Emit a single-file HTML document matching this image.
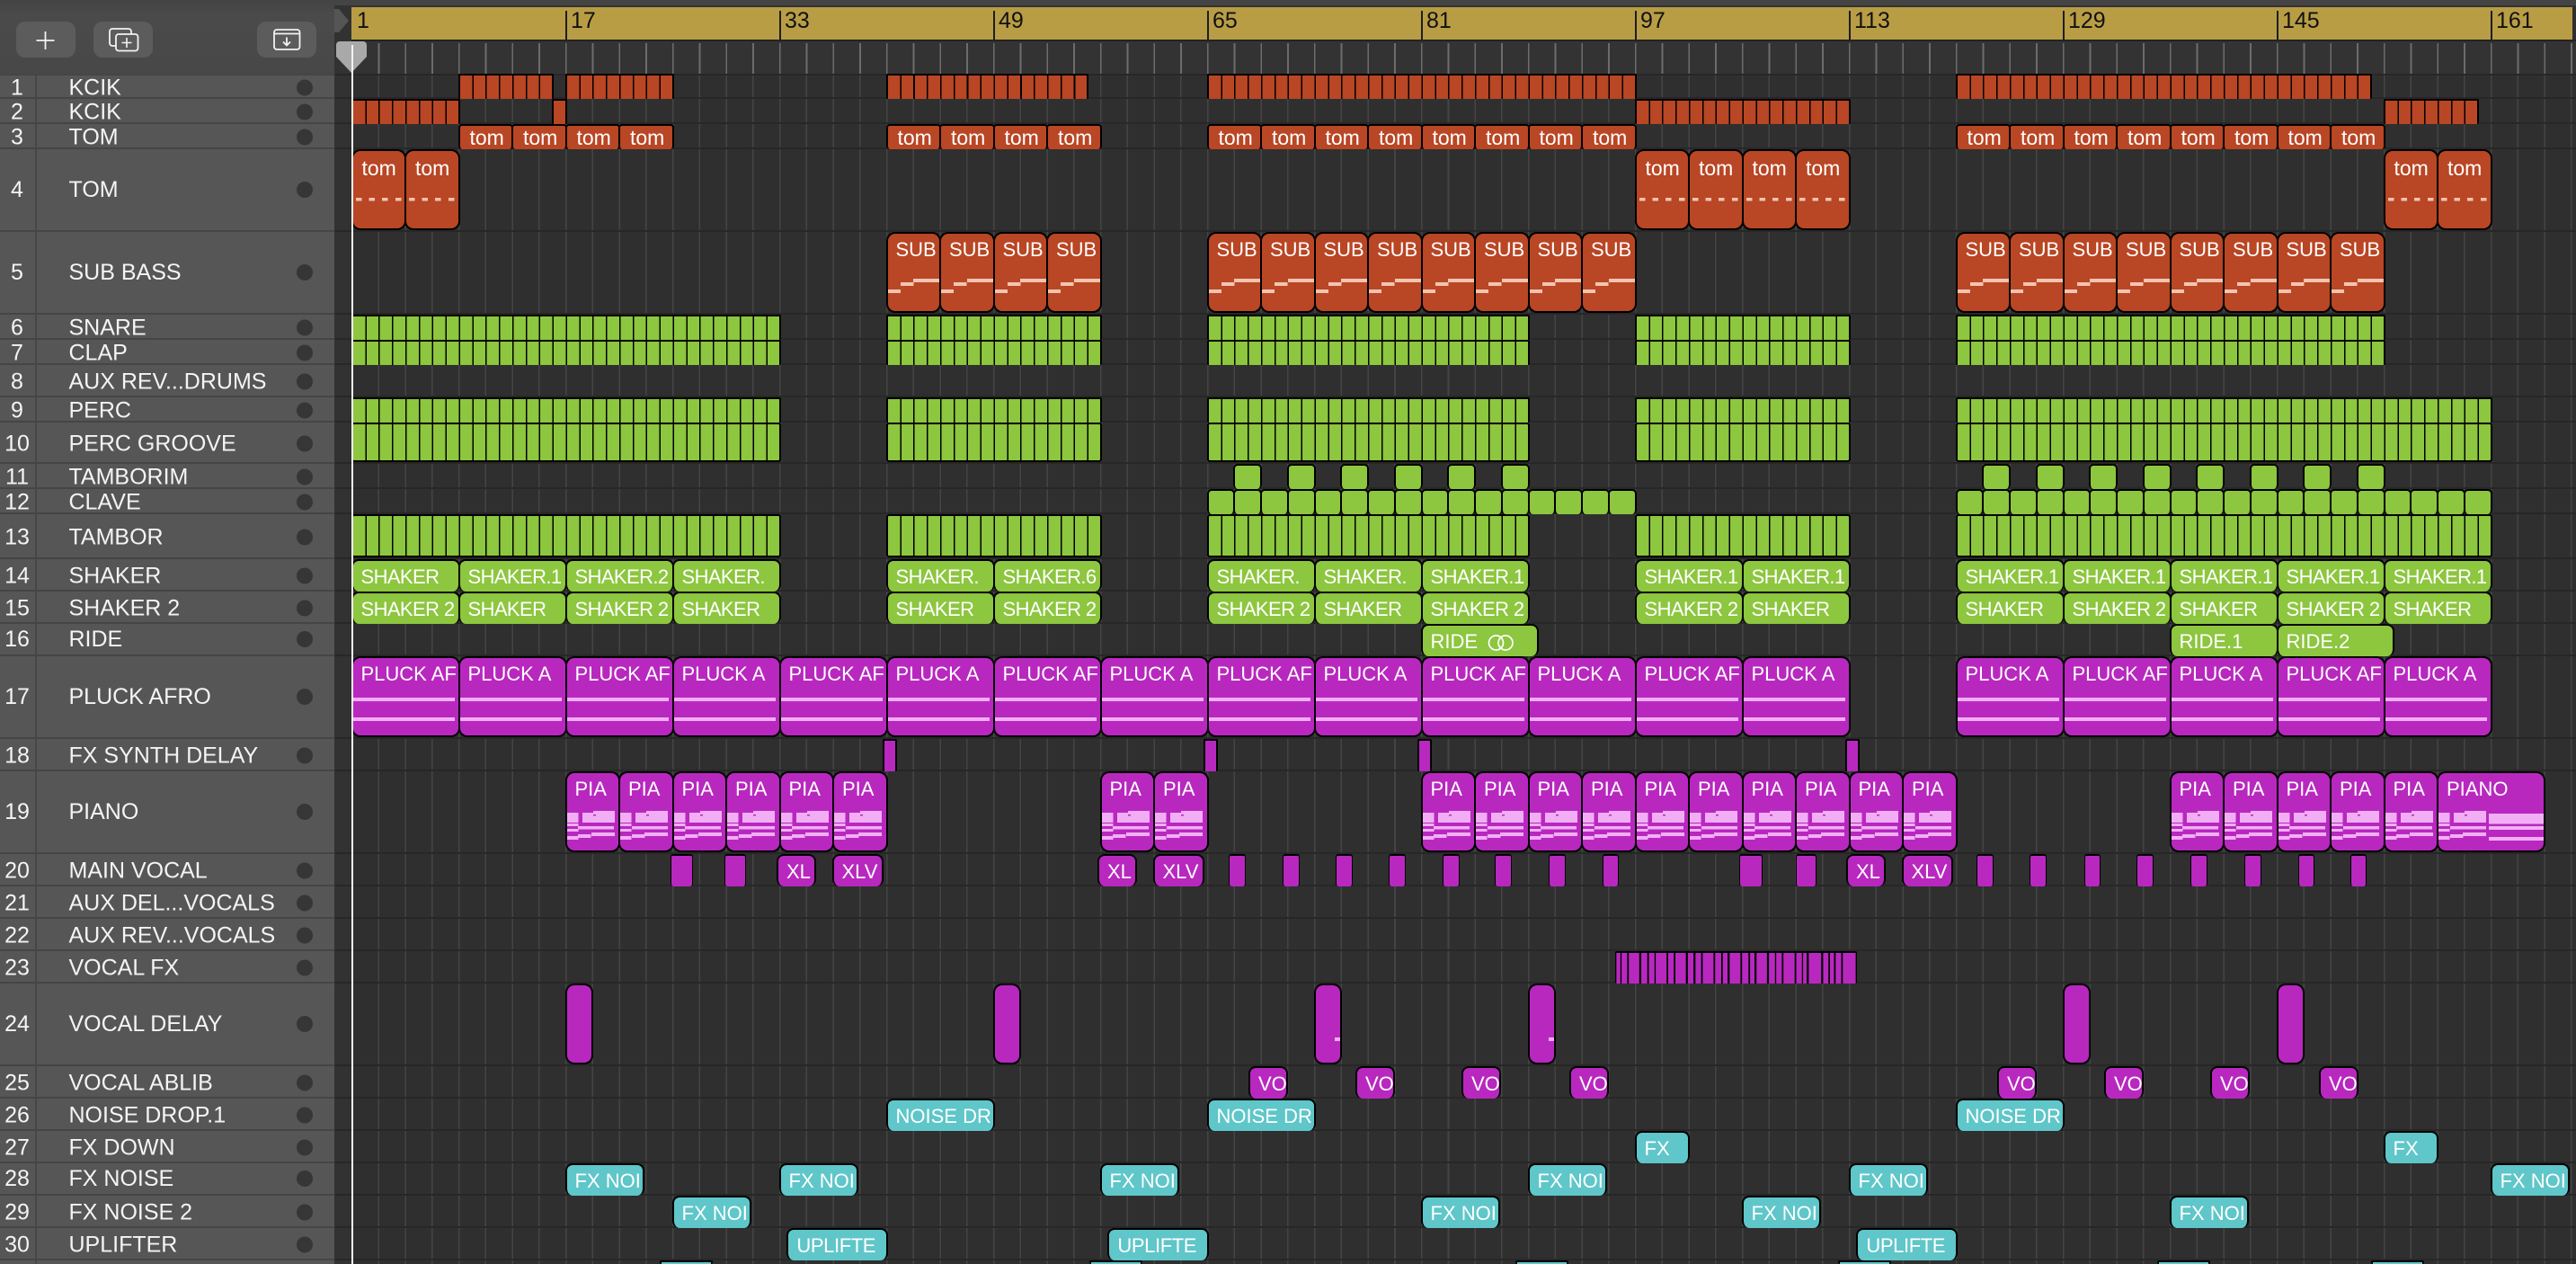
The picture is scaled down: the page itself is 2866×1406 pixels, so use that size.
<!DOCTYPE html>
<html><head><meta charset="utf-8"><title>Arrangement</title>
<style>
html,body{margin:0;padding:0;background:#2f2f2f}
body{position:relative;width:2866px;height:1406px;overflow:hidden;font-family:"Liberation Sans",sans-serif;
--p:linear-gradient(#f2aef5,#f2aef5);--q:linear-gradient(#f3c4b2,#f3c4b2);--m:linear-gradient(#b828bf,#b828bf)}
.a{position:absolute}
.tool{left:0;top:0;width:372px;height:82px;background:linear-gradient(#434343,#4a4a4a 20%,#484848)}
.tool svg{position:absolute;left:0;top:0}
.h{position:absolute;left:0;width:372px;background:#565656;border-top:2px solid #454545;box-sizing:border-box;color:#f4f4f4;font-size:25px;display:flex;align-items:center}
.h:before{content:"";position:absolute;left:38.5px;top:0;bottom:0;width:2px;background:#464646}
.h b{font-weight:normal;position:absolute;left:0;width:38px;text-align:center;white-space:nowrap}
.h em{font-style:normal;position:absolute;left:76.5px;white-space:nowrap}
.h s{position:absolute;left:330px;width:18px;height:18px;border-radius:50%;background:#363636}
.h:not([style*="92px"])>*{transform:translateY(1.5px)}
.t{position:absolute;left:390.5px;right:0}
.t:before{content:"";position:absolute;left:-18px;right:0;top:0;height:2px;background:#272727}
.f:before{top:2px}
i{position:absolute;top:2px;bottom:-2px;--w:4;left:calc((var(--b) - 1)*14.875px);width:calc(var(--w)*14.875px + 2px);box-sizing:border-box;border:2px solid #000;border-bottom:0;border-radius:8px;overflow:hidden;white-space:nowrap;color:#fff;font-style:normal;font-size:22px;line-height:36.8px;padding-left:9px;z-index:1;background-repeat:no-repeat}
.T i{bottom:0;border-bottom:2px solid #000;border-radius:10px}
.o{background-color:#b94624}.g{background-color:#8dc63f}.m{background-color:#b828bf}.c{background-color:#5fc6c9}
.so,.sg{border-radius:2px;padding:0}
.T .so,.T .sg{border-radius:3px}
.so{background:repeating-linear-gradient(90deg,#b94624 0 13.275px,#000 13.275px 14.875px)}
.sg{background:repeating-linear-gradient(90deg,#8dc63f 0 13.275px,#000 13.275px 14.875px)}
.tm{font-size:23px;line-height:27.5px;border-radius:4px;padding-left:11px;background-color:#b94624}
.tt{font-size:23px;line-height:38px;padding-left:10px;background-color:#b94624;background-image:repeating-linear-gradient(90deg,#f3c4b2 0 6.5px,transparent 6.5px 14.6px);background-position:3px 52px;background-size:calc(100% - 5px) 3.5px}
.sb{background-color:#b94624;background-image:var(--q),var(--q),var(--q);background-position:0 62px,14px 54px,28.5px 50px;background-size:14px 4px,14.5px 4px,100% 4px}
.k{--w:2;border-radius:5px;background-color:#8dc63f}
.sh{background-color:#8dc63f;letter-spacing:-.6px;--w:8}
.pl{--w:8;background-color:#b828bf;background-image:var(--p),var(--p);background-position:0 44px,0 66px;background-size:calc(100% - 4px) 4px,calc(100% - 4px) 4px}
.pi{background-color:#b828bf;background-image:var(--m),var(--p),var(--p),var(--p),var(--p),var(--p),var(--p),var(--p),var(--p),var(--p);background-position:29px 46px,29px 42px,0 44px,17px 44px,0 56px,12.5px 58.5px,0 62px,27px 66px,12.5px 68px,0 70px;background-size:3px 1.5px,24px 2px,12.5px 11px,36px 11px,12.5px 3px,40px 3.5px,12.5px 3px,26px 4px,14.5px 4px,12.5px 4px}
.pn{--w:8;background-color:#b828bf;background-image:var(--m),var(--p),var(--p),var(--p),var(--p),var(--p),var(--p),var(--p),var(--p),var(--p),var(--p),var(--p),var(--p);background-position:29px 46px,29px 42px,0 44px,17px 44px,0 56px,12.5px 58.5px,0 62px,27px 66px,12.5px 68px,0 70px,56px 44.5px,56px 59px,56px 71px;background-size:3px 1.5px,24px 2px,12.5px 11px,36px 11px,12.5px 3px,40px 3.5px,12.5px 3px,26px 4px,14.5px 4px,12.5px 4px,61px 11.5px,61px 4px,61px 4px}
.v{border-radius:3px;border-width:2px 1.2px 0;width:18.5px;padding:0;background-color:#b828bf}
.x{border-radius:8px;padding-left:9px;background-color:#b828bf}
.fx{border-radius:2px;padding:0;width:16px;background-color:#b828bf}
.d{--w:2;padding:0;background-color:#b828bf}
.dd{background-image:var(--p);background-position:21px 58px;background-size:6px 4px}
.vo{width:44px;background-color:#b828bf;padding-left:9px}
.n{--w:6;background-color:#5fc6c9;width:88px}
.u{--w:7.45;background-color:#5fc6c9;padding-left:9px;letter-spacing:-.4px}
u{position:absolute;top:12px;height:32px;left:calc(391px + (var(--b) - 1)*14.875px);border-left:2px solid #1e1e1e;padding-left:4px;text-decoration:none;color:#111;font-size:25px;line-height:22px;z-index:2}
</style></head><body>

<div class="a" style="left:0;top:0;width:2866px;height:6px;background:#444"></div>
<div class="a" style="left:372px;top:6px;width:2494px;height:2px;background:#333"></div>
<div class="a" style="left:372px;top:8px;width:19px;height:1398px;background:#323232"></div>
<div class="a" style="left:391px;top:8px;width:2471px;height:36px;background:#b89d45"></div>
<div class="a" style="left:391px;top:44px;width:2475px;height:2px;background:#232323"></div>
<div class="a" style="left:391px;top:46px;width:2475px;height:38px;background:#333"></div>
<div class="a" style="left:391px;top:48px;width:2475px;height:34px;background:repeating-linear-gradient(90deg,#6c6c6c 0 1.6px,transparent 1.6px 29.75px)"></div>
<div class="a" style="left:391px;top:84px;width:2475px;height:1322px;background:#2f2f2f repeating-linear-gradient(90deg,#444 0 1.5px,transparent 1.5px 29.75px)"></div>

<svg class="a" style="left:372px;top:8px" width="19" height="32"><path d="M0 2H5L16 15L5 28H0z" fill="#555"/></svg>

<u style="--b:1;border-left-color:transparent">1</u><u style="--b:17">17</u><u style="--b:33">33</u><u style="--b:49">49</u><u style="--b:65">65</u><u style="--b:81">81</u><u style="--b:97">97</u><u style="--b:113">113</u><u style="--b:129">129</u><u style="--b:145">145</u><u style="--b:161">161</u>

<div class="a tool"><svg width="372" height="82" fill="none">
<rect x="18" y="24" width="66" height="40" rx="10" fill="#5c5c5c"/>
<rect x="104" y="24" width="66" height="40" rx="10" fill="#5c5c5c"/>
<rect x="286" y="24" width="66" height="40" rx="10" fill="#5c5c5c"/>
<path d="M50.5 35V55M40.5 45H60.5" stroke="#f2f2f2" stroke-width="1.8"/>
<path d="M129 51H125a3 3 0 0 1-3-3V35a3 3 0 0 1 3-3H143a3 3 0 0 1 3 3V38" stroke="#f2f2f2" stroke-width="1.8"/>
<rect x="129" y="38" width="24.5" height="18.5" rx="3" stroke="#f2f2f2" stroke-width="1.8"/>
<path d="M141 42V53M135.5 47.5H146.5" stroke="#f2f2f2" stroke-width="1.6"/>
<rect x="305" y="33" width="28.5" height="22" rx="3" stroke="#f2f2f2" stroke-width="1.8"/>
<path d="M305 37.5H333.5" stroke="#f2f2f2" stroke-width="1.8"/>
<path d="M319 41.5V50M315 46.5L319 50.5L323 46.5" stroke="#f2f2f2" stroke-width="1.8"/>
</svg></div>

<div class="h" style="top:82px;height:26px"><b>1</b><em>KCIK</em><s></s></div>
<div class="h" style="top:108px;height:28px"><b>2</b><em>KCIK</em><s></s></div>
<div class="h" style="top:136px;height:28px"><b>3</b><em>TOM</em><s></s></div>
<div class="h" style="top:164px;height:92px"><b>4</b><em>TOM</em><s></s></div>
<div class="h" style="top:256px;height:92px"><b>5</b><em>SUB BASS</em><s></s></div>
<div class="h" style="top:348px;height:28px"><b>6</b><em>SNARE</em><s></s></div>
<div class="h" style="top:376px;height:28px"><b>7</b><em>CLAP</em><s></s></div>
<div class="h" style="top:404px;height:36px"><b>8</b><em>AUX REV...DRUMS</em><s></s></div>
<div class="h" style="top:440px;height:28px"><b>9</b><em>PERC</em><s></s></div>
<div class="h" style="top:468px;height:46px"><b>10</b><em>PERC GROOVE</em><s></s></div>
<div class="h" style="top:514px;height:28px"><b>11</b><em>TAMBORIM</em><s></s></div>
<div class="h" style="top:542px;height:28px"><b>12</b><em>CLAVE</em><s></s></div>
<div class="h" style="top:570px;height:50px"><b>13</b><em>TAMBOR</em><s></s></div>
<div class="h" style="top:620px;height:36px"><b>14</b><em>SHAKER</em><s></s></div>
<div class="h" style="top:656px;height:36px"><b>15</b><em>SHAKER 2</em><s></s></div>
<div class="h" style="top:692px;height:36px"><b>16</b><em>RIDE</em><s></s></div>
<div class="h" style="top:728px;height:92px"><b>17</b><em>PLUCK AFRO</em><s></s></div>
<div class="h" style="top:820px;height:36px"><b>18</b><em>FX SYNTH DELAY</em><s></s></div>
<div class="h" style="top:856px;height:92px"><b>19</b><em>PIANO</em><s></s></div>
<div class="h" style="top:948px;height:36px"><b>20</b><em>MAIN VOCAL</em><s></s></div>
<div class="h" style="top:984px;height:36px"><b>21</b><em>AUX DEL...VOCALS</em><s></s></div>
<div class="h" style="top:1020px;height:36px"><b>22</b><em>AUX REV...VOCALS</em><s></s></div>
<div class="h" style="top:1056px;height:36px"><b>23</b><em>VOCAL FX</em><s></s></div>
<div class="h" style="top:1092px;height:92px"><b>24</b><em>VOCAL DELAY</em><s></s></div>
<div class="h" style="top:1184px;height:36px"><b>25</b><em>VOCAL ABLIB</em><s></s></div>
<div class="h" style="top:1220px;height:36px"><b>26</b><em>NOISE DROP.1</em><s></s></div>
<div class="h" style="top:1256px;height:36px"><b>27</b><em>FX DOWN</em><s></s></div>
<div class="h" style="top:1292px;height:36px"><b>28</b><em>FX NOISE</em><s></s></div>
<div class="h" style="top:1328px;height:36px"><b>29</b><em>FX NOISE 2</em><s></s></div>
<div class="h" style="top:1364px;height:36px"><b>30</b><em>UPLIFTER</em><s></s></div>
<div class="h" style="top:1400px;height:6px"></div>

<div class="t f" style="top:80px;height:28px">
<i class="so" style="--b:9;--w:7"></i><i class="so" style="--b:17;--w:8"></i><i class="so" style="--b:41;--w:15"></i><i class="so" style="--b:65;--w:32"></i><i class="so" style="--b:121;--w:31"></i>
</div>
<div class="t" style="top:108px;height:28px">
<i class="so" style="--b:1;--w:8"></i><i class="so" style="--b:16;--w:1"></i><i class="so" style="--b:97;--w:16"></i><i class="so" style="--b:153;--w:7"></i>
</div>
<div class="t" style="top:136px;height:28px">
<i class="tm" style="--b:9">tom</i><i class="tm" style="--b:13">tom</i><i class="tm" style="--b:17">tom</i><i class="tm" style="--b:21">tom</i>
<i class="tm" style="--b:41">tom</i><i class="tm" style="--b:45">tom</i><i class="tm" style="--b:49">tom</i><i class="tm" style="--b:53">tom</i>
<i class="tm" style="--b:65">tom</i><i class="tm" style="--b:69">tom</i><i class="tm" style="--b:73">tom</i><i class="tm" style="--b:77">tom</i><i class="tm" style="--b:81">tom</i><i class="tm" style="--b:85">tom</i><i class="tm" style="--b:89">tom</i><i class="tm" style="--b:93">tom</i>
<i class="tm" style="--b:121">tom</i><i class="tm" style="--b:125">tom</i><i class="tm" style="--b:129">tom</i><i class="tm" style="--b:133">tom</i><i class="tm" style="--b:137">tom</i><i class="tm" style="--b:141">tom</i><i class="tm" style="--b:145">tom</i><i class="tm" style="--b:149">tom</i>
</div>
<div class="t T" style="top:164px;height:92px">
<i class="tt" style="--b:1">tom</i><i class="tt" style="--b:5">tom</i>
<i class="tt" style="--b:97">tom</i><i class="tt" style="--b:101">tom</i><i class="tt" style="--b:105">tom</i><i class="tt" style="--b:109">tom</i>
<i class="tt" style="--b:153">tom</i><i class="tt" style="--b:157">tom</i>
</div>
<div class="t T" style="top:256px;height:92px">
<i class="sb" style="--b:41">SUB</i><i class="sb" style="--b:45">SUB</i><i class="sb" style="--b:49">SUB</i><i class="sb" style="--b:53">SUB</i>
<i class="sb" style="--b:65">SUB</i><i class="sb" style="--b:69">SUB</i><i class="sb" style="--b:73">SUB</i><i class="sb" style="--b:77">SUB</i><i class="sb" style="--b:81">SUB</i><i class="sb" style="--b:85">SUB</i><i class="sb" style="--b:89">SUB</i><i class="sb" style="--b:93">SUB</i>
<i class="sb" style="--b:121">SUB</i><i class="sb" style="--b:125">SUB</i><i class="sb" style="--b:129">SUB</i><i class="sb" style="--b:133">SUB</i><i class="sb" style="--b:137">SUB</i><i class="sb" style="--b:141">SUB</i><i class="sb" style="--b:145">SUB</i><i class="sb" style="--b:149">SUB</i>
</div>
<div class="t" style="top:348px;height:28px">
<i class="sg" style="--b:1;--w:32"></i><i class="sg" style="--b:41;--w:16"></i><i class="sg" style="--b:65;--w:24"></i><i class="sg" style="--b:97;--w:16"></i><i class="sg" style="--b:121;--w:32"></i>
</div>
<div class="t" style="top:376px;height:28px">
<i class="sg" style="--b:1;--w:32"></i><i class="sg" style="--b:41;--w:16"></i><i class="sg" style="--b:65;--w:24"></i><i class="sg" style="--b:97;--w:16"></i><i class="sg" style="--b:121;--w:32"></i>
</div>
<div class="t" style="top:404px;height:36px"></div>
<div class="t" style="top:440px;height:28px">
<i class="sg" style="--b:1;--w:32"></i><i class="sg" style="--b:41;--w:16"></i><i class="sg" style="--b:65;--w:24"></i><i class="sg" style="--b:97;--w:16"></i><i class="sg" style="--b:121;--w:40"></i>
</div>
<div class="t T" style="top:468px;height:46px">
<i class="sg" style="--b:1;--w:32"></i><i class="sg" style="--b:41;--w:16"></i><i class="sg" style="--b:65;--w:24"></i><i class="sg" style="--b:97;--w:16"></i><i class="sg" style="--b:121;--w:40"></i>
</div>
<div class="t" style="top:514px;height:28px">
<i class="k" style="--b:67"></i><i class="k" style="--b:71"></i><i class="k" style="--b:75"></i><i class="k" style="--b:79"></i><i class="k" style="--b:83"></i><i class="k" style="--b:87"></i>
<i class="k" style="--b:123"></i><i class="k" style="--b:127"></i><i class="k" style="--b:131"></i><i class="k" style="--b:135"></i><i class="k" style="--b:139"></i><i class="k" style="--b:143"></i><i class="k" style="--b:147"></i><i class="k" style="--b:151"></i>
</div>
<div class="t" style="top:541.5px;height:28.5px">
<i class="k" style="--b:65"></i><i class="k" style="--b:67"></i><i class="k" style="--b:69"></i><i class="k" style="--b:71"></i><i class="k" style="--b:73"></i><i class="k" style="--b:75"></i><i class="k" style="--b:77"></i><i class="k" style="--b:79"></i><i class="k" style="--b:81"></i><i class="k" style="--b:83"></i><i class="k" style="--b:85"></i><i class="k" style="--b:87"></i><i class="k" style="--b:89"></i><i class="k" style="--b:91"></i><i class="k" style="--b:93"></i><i class="k" style="--b:95"></i>
<i class="k" style="--b:121"></i><i class="k" style="--b:123"></i><i class="k" style="--b:125"></i><i class="k" style="--b:127"></i><i class="k" style="--b:129"></i><i class="k" style="--b:131"></i><i class="k" style="--b:133"></i><i class="k" style="--b:135"></i><i class="k" style="--b:137"></i><i class="k" style="--b:139"></i><i class="k" style="--b:141"></i><i class="k" style="--b:143"></i><i class="k" style="--b:145"></i><i class="k" style="--b:147"></i><i class="k" style="--b:149"></i><i class="k" style="--b:151"></i><i class="k" style="--b:153"></i><i class="k" style="--b:155"></i><i class="k" style="--b:157"></i><i class="k" style="--b:159"></i>
</div>
<div class="t T" style="top:570px;height:50px">
<i class="sg" style="--b:1;--w:32"></i><i class="sg" style="--b:41;--w:16"></i><i class="sg" style="--b:65;--w:24"></i><i class="sg" style="--b:97;--w:16"></i><i class="sg" style="--b:121;--w:40"></i>
</div>
<div class="t" style="top:620px;height:36px">
<i class="sh" style="--b:1">SHAKER</i><i class="sh" style="--b:9">SHAKER.1</i><i class="sh" style="--b:17">SHAKER.2</i><i class="sh" style="--b:25">SHAKER.</i>
<i class="sh" style="--b:41">SHAKER.</i><i class="sh" style="--b:49">SHAKER.6</i>
<i class="sh" style="--b:65">SHAKER.</i><i class="sh" style="--b:73">SHAKER.</i><i class="sh" style="--b:81">SHAKER.1</i>
<i class="sh" style="--b:97">SHAKER.1</i><i class="sh" style="--b:105">SHAKER.1</i>
<i class="sh" style="--b:121">SHAKER.1</i><i class="sh" style="--b:129">SHAKER.1</i><i class="sh" style="--b:137">SHAKER.1</i><i class="sh" style="--b:145">SHAKER.1</i><i class="sh" style="--b:153">SHAKER.1</i>
</div>
<div class="t" style="top:656px;height:36px">
<i class="sh" style="--b:1">SHAKER 2</i><i class="sh" style="--b:9">SHAKER</i><i class="sh" style="--b:17">SHAKER 2</i><i class="sh" style="--b:25">SHAKER</i>
<i class="sh" style="--b:41">SHAKER</i><i class="sh" style="--b:49">SHAKER 2</i>
<i class="sh" style="--b:65">SHAKER 2</i><i class="sh" style="--b:73">SHAKER</i><i class="sh" style="--b:81">SHAKER 2</i>
<i class="sh" style="--b:97">SHAKER 2</i><i class="sh" style="--b:105">SHAKER</i>
<i class="sh" style="--b:121">SHAKER</i><i class="sh" style="--b:129">SHAKER 2</i><i class="sh" style="--b:137">SHAKER</i><i class="sh" style="--b:145">SHAKER 2</i><i class="sh" style="--b:153">SHAKER</i>
</div>
<div class="t" style="top:692px;height:36px">
<i class="g" style="--b:81;--w:8.7">RIDE<svg style="position:absolute;left:72px;top:9px" width="30" height="20" fill="none" stroke="#fff" stroke-width="1.7"><circle cx="9.5" cy="10" r="8"/><circle cx="20" cy="10" r="8"/></svg></i>
<i class="g" style="--b:137;--w:8">RIDE.1</i><i class="g" style="--b:145;--w:8.7">RIDE.2</i>
</div>
<div class="t T" style="top:728px;height:92px">
<i class="pl" style="--b:1">PLUCK AF</i><i class="pl" style="--b:9">PLUCK A</i><i class="pl" style="--b:17">PLUCK AF</i><i class="pl" style="--b:25">PLUCK A</i><i class="pl" style="--b:33">PLUCK AF</i><i class="pl" style="--b:41">PLUCK A</i><i class="pl" style="--b:49">PLUCK AF</i><i class="pl" style="--b:57">PLUCK A</i><i class="pl" style="--b:65">PLUCK AF</i><i class="pl" style="--b:73">PLUCK A</i><i class="pl" style="--b:81">PLUCK AF</i><i class="pl" style="--b:89">PLUCK A</i><i class="pl" style="--b:97">PLUCK AF</i><i class="pl" style="--b:105">PLUCK A</i>
<i class="pl" style="--b:121">PLUCK A</i><i class="pl" style="--b:129">PLUCK AF</i><i class="pl" style="--b:137">PLUCK A</i><i class="pl" style="--b:145">PLUCK AF</i><i class="pl" style="--b:153">PLUCK A</i>
</div>
<div class="t" style="top:820px;height:36px">
<i class="fx" style="left:591.5px"></i><i class="fx" style="left:948.5px"></i><i class="fx" style="left:1186.5px"></i><i class="fx" style="left:1662.5px"></i>
</div>
<div class="t T" style="top:856px;height:92px">
<i class="pi" style="--b:17">PIA</i><i class="pi" style="--b:21">PIA</i><i class="pi" style="--b:25">PIA</i><i class="pi" style="--b:29">PIA</i><i class="pi" style="--b:33">PIA</i><i class="pi" style="--b:37">PIA</i>
<i class="pi" style="--b:57">PIA</i><i class="pi" style="--b:61">PIA</i>
<i class="pi" style="--b:81">PIA</i><i class="pi" style="--b:85">PIA</i><i class="pi" style="--b:89">PIA</i><i class="pi" style="--b:93">PIA</i><i class="pi" style="--b:97">PIA</i><i class="pi" style="--b:101">PIA</i><i class="pi" style="--b:105">PIA</i><i class="pi" style="--b:109">PIA</i><i class="pi" style="--b:113">PIA</i><i class="pi" style="--b:117">PIA</i>
<i class="pi" style="--b:137">PIA</i><i class="pi" style="--b:141">PIA</i><i class="pi" style="--b:145">PIA</i><i class="pi" style="--b:149">PIA</i><i class="pi" style="--b:153">PIA</i><i class="pn" style="--b:157">PIANO</i>
</div>
<div class="t" style="top:948px;height:36px">
<i class="v" style="left:355.5px;width:25px"></i><i class="v" style="left:415.5px;width:24px"></i>
<i class="x" style="left:473.5px;width:44px">XL</i><i class="x" style="left:535px;width:57px">XLV</i>
<i class="x" style="left:830.5px;width:44px">XL</i><i class="x" style="left:892px;width:57px">XLV</i>
<i class="v" style="left:976.5px"></i><i class="v" style="left:1036.5px"></i><i class="v" style="left:1095.5px"></i><i class="v" style="left:1154.5px"></i><i class="v" style="left:1214.5px"></i><i class="v" style="left:1272.5px"></i><i class="v" style="left:1332.5px"></i><i class="v" style="left:1392px"></i>
<i class="v" style="left:1544.5px;width:26px"></i><i class="v" style="left:1607.5px;width:23px"></i>
<i class="x" style="left:1663.5px;width:44px">XL</i><i class="x" style="left:1725px;width:57px">XLV</i>
<i class="v" style="left:1808.5px"></i><i class="v" style="left:1867.5px"></i><i class="v" style="left:1928px"></i><i class="v" style="left:1986.5px"></i><i class="v" style="left:2046.5px"></i><i class="v" style="left:2106.5px"></i><i class="v" style="left:2166px"></i><i class="v" style="left:2224px"></i>
</div>
<div class="t" style="top:984px;height:36px"></div>
<div class="t" style="top:1020px;height:36px"></div>
<div class="t" style="top:1056px;height:36px">
<i style="left:1406.5px;width:268.5px;background:#000;border-width:2px 0 0;border-radius:2px;padding:0"><svg style="position:absolute;left:0;top:0;display:block" width="268.5" height="34" viewBox="0 0 601 100" preserveAspectRatio="none"><path fill="#b828bf" d="M3 0H13V100H3zM16 0H30V100H16zM34 0H60V100H34zM65 0H80V100H65zM84 0H98V100H84zM101 0H128V100H101zM132 0H146V100H132zM150 0H176V100H150zM181 0H195V100H181zM200 0H214V100H200zM218 0H245V100H218zM249 0H264V100H249zM268 0H280V100H268zM285 0H312V100H285zM316 0H332V100H316zM336 0H347V100H336zM352 0H378V100H352zM383 0H398V100H383zM401 0H415V100H401zM419 0H447V100H419zM451 0H465V100H451zM468 0H477V100H468zM482 0H513V100H482zM518 0H531V100H518zM535 0H545V100H535zM549 0H563V100H549zM567 0H599V100H567z"/></svg></i>
</div>
<div class="t T" style="top:1092px;height:92px">
<i class="d" style="--b:17"></i><i class="d" style="--b:49"></i><i class="d dd" style="--b:73"></i><i class="d dd" style="--b:89"></i><i class="d" style="--b:129"></i><i class="d" style="--b:145"></i>
</div>
<div class="t" style="top:1184px;height:36px">
<i class="vo" style="left:998.5px">VO</i><i class="vo" style="left:1117.5px">VO</i><i class="vo" style="left:1235.5px">VO</i><i class="vo" style="left:1355.5px">VO</i>
<i class="vo" style="left:1831.5px">VO</i><i class="vo" style="left:1950.5px">VO</i><i class="vo" style="left:2068.5px">VO</i><i class="vo" style="left:2189.5px">VO</i>
</div>
<div class="t" style="top:1220px;height:36px">
<i class="c" style="--b:41;--w:8">NOISE DR</i><i class="c" style="--b:65;--w:8">NOISE DR</i><i class="c" style="--b:121;--w:8">NOISE DR</i>
</div>
<div class="t" style="top:1256px;height:36px">
<i class="c" style="--b:97">FX</i><i class="c" style="--b:153">FX</i>
</div>
<div class="t" style="top:1292px;height:36px">
<i class="n" style="--b:17">FX NOI</i><i class="n" style="--b:33">FX NOI</i><i class="n" style="--b:57">FX NOI</i><i class="n" style="--b:89">FX NOI</i><i class="n" style="--b:113">FX NOI</i><i class="n" style="--b:161">FX NOI</i>
</div>
<div class="t" style="top:1328px;height:36px">
<i class="n" style="--b:25">FX NOI</i><i class="n" style="--b:81">FX NOI</i><i class="n" style="--b:105">FX NOI</i><i class="n" style="--b:137">FX NOI</i>
</div>
<div class="t" style="top:1364px;height:36px">
<i class="u" style="--b:33.6">UPLIFTE</i><i class="u" style="--b:57.6">UPLIFTE</i><i class="u" style="--b:113.6">UPLIFTE</i>
</div>
<div class="t" style="top:1400px;height:6px">
<i class="c" style="--b:24.1;--w:3.85;bottom:0"></i><i class="c" style="--b:56.2;--w:3.85;bottom:0"></i><i class="c" style="--b:88.1;--w:3.85;bottom:0"></i><i class="c" style="--b:112.2;--w:3.85;bottom:0"></i><i class="c" style="--b:136.1;--w:3.85;bottom:0"></i><i class="c" style="--b:152.1;--w:3.85;bottom:0"></i>
</div>

<svg class="a" style="left:372px;top:44px;z-index:5" width="40" height="40"><path d="M2 6a4 4 0 0 1 4-4H32a4 4 0 0 1 4 4V19L19 37L2 19z" fill="#a9a9a9"/></svg>
<div class="a" style="left:390.6px;top:50px;width:2px;height:1356px;background:#f4f4f4;z-index:6"></div>
</body></html>
